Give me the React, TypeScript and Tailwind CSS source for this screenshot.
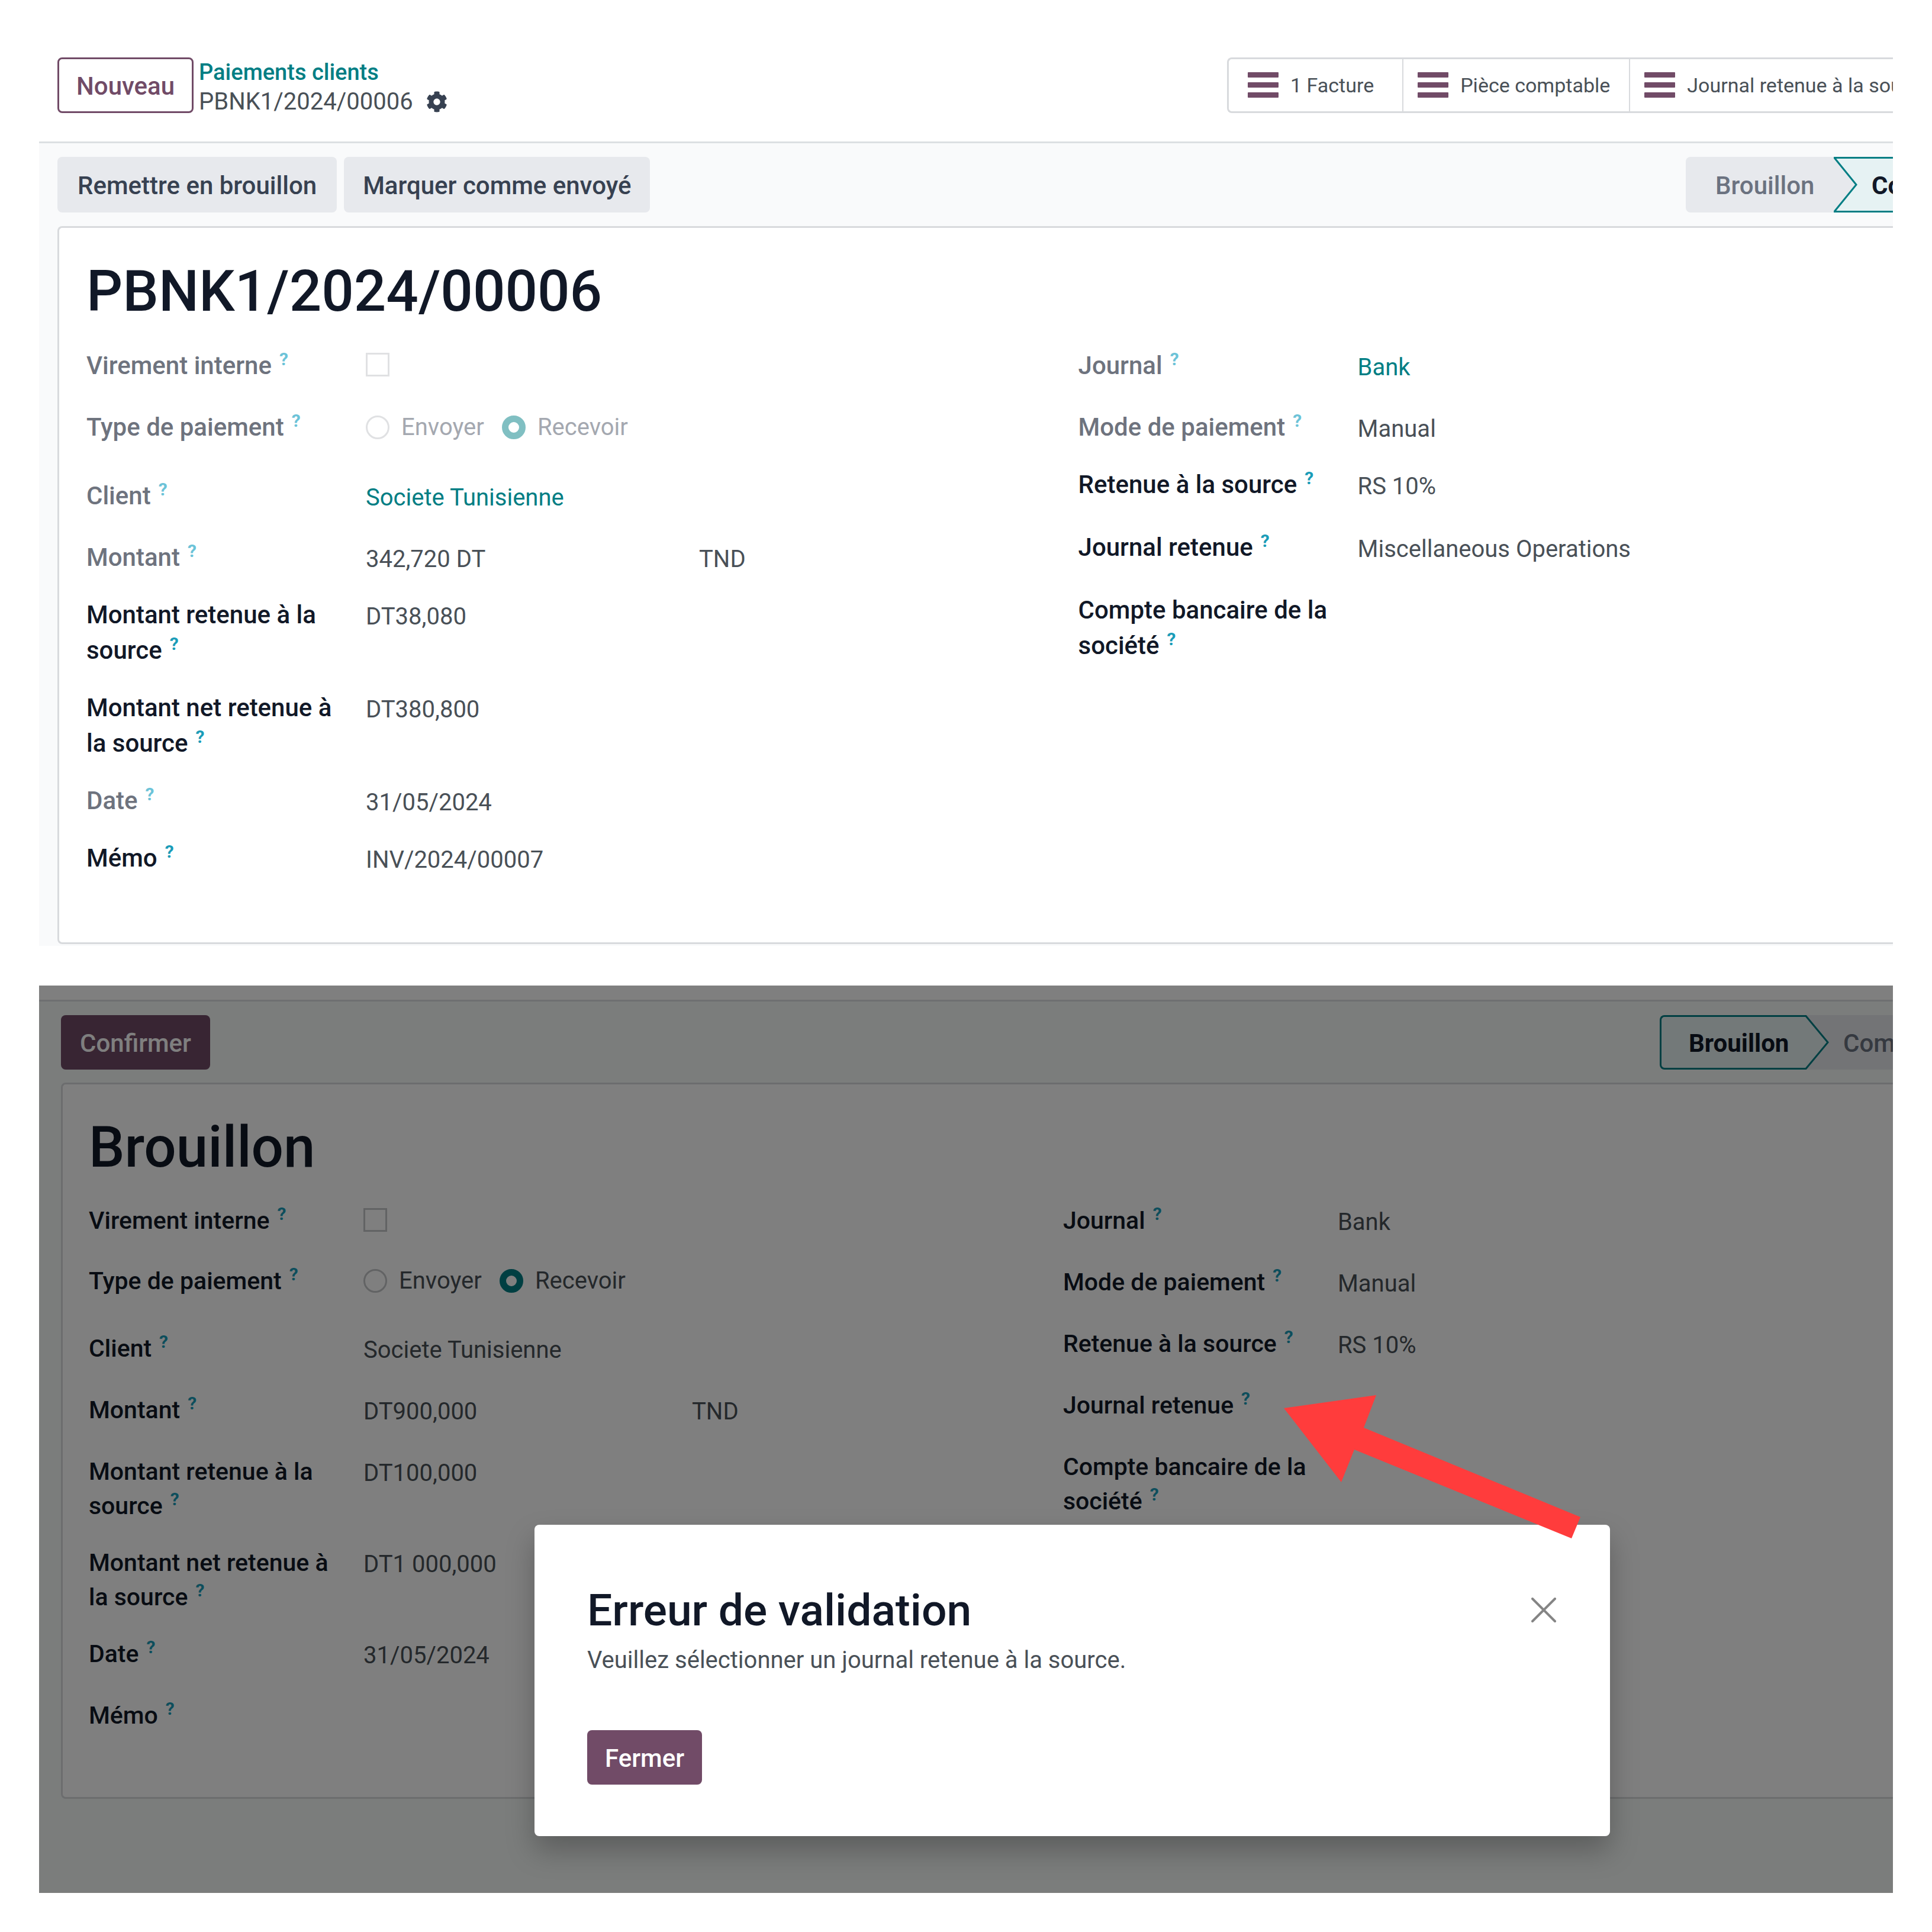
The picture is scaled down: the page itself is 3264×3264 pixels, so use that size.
import type { ReactNode } from "react";
import { FaCog } from "react-icons/fa";

type Field = {
  label: string;
  value?: ReactNode;
  extra?: string;
  muted?: boolean;
  control?: string;
  widget?: boolean;
  space: string;
};

type FieldStyle = { label: string; line: string; first: string };

const confirmedStyle: FieldStyle = { label: "w-[472px] pr-8 text-[42px]", line: "leading-[60px]", first: "w-[563px]" };
const draftStyle: FieldStyle = { label: "w-[464px] pr-7 text-[41px]", line: "leading-[58px]", first: "w-[555px]" };

function HelpMark({ muted }: { muted?: boolean }) {
  return <sup className={`ml-[13px] text-[30px] font-bold ${muted ? "text-[#6cc3d8]" : "text-[#1a9cb8]"}`}>?</sup>;
}

function FieldRow({ field, look }: { field: Field; look: FieldStyle }) {
  const labelClass = `${look.label} ${look.line} shrink-0 font-medium ${field.muted ? "text-[#6e737e]" : "text-[#111827]"}`;
  return (
    <div className={`flex items-start ${field.space}`}>
      {field.control ? (
        <label htmlFor={field.control} className={labelClass}>
          {field.label}
          <HelpMark muted={field.muted} />
        </label>
      ) : (
        <span className={labelClass}>
          {field.label}
          <HelpMark muted={field.muted} />
        </span>
      )}
      <div className={`${look.line} flex whitespace-nowrap text-[#495057] ${field.widget ? "" : "pt-[3px]"}`}>
        <span className={field.extra ? look.first : ""}>{field.value}</span>
        {field.extra && <span>{field.extra}</span>}
      </div>
    </div>
  );
}

function FieldGroup({ fields, look }: { fields: Field[]; look: FieldStyle }) {
  return (
    <div>
      {fields.map((f) => (
        <FieldRow key={f.label} field={f} look={look} />
      ))}
    </div>
  );
}

function Check({ id, muted }: { id: string; muted?: boolean }) {
  return (
    <input
      id={id}
      type="checkbox"
      disabled={muted}
      className={`mt-2 block size-10 appearance-none border-[3px] ${muted ? "border-[#e0e1e3]" : "border-[#c4c6c9]"}`}
    />
  );
}

function Radios({ prefix, muted }: { prefix: string; muted?: boolean }) {
  return (
    <div role="radiogroup" aria-label="Type de paiement" className="flex items-center">
      <input
        id={`${prefix}-envoyer`}
        name={`${prefix}-type`}
        type="radio"
        disabled={muted}
        className={`size-10 appearance-none rounded-full border-[3px] ${muted ? "border-[#e0e1e3]" : "border-[#c4c6c9]"}`}
      />
      <label htmlFor={`${prefix}-envoyer`} className={`ml-5 ${muted ? "text-[#a4a8b0]" : ""}`}>
        Envoyer
      </label>
      <input
        id={`${prefix}-recevoir`}
        name={`${prefix}-type`}
        type="radio"
        defaultChecked
        disabled={muted}
        className={`ml-[30px] size-10 appearance-none rounded-full border-[11px] bg-white ${muted ? "border-[#80bfc2]" : "border-[#017e84]"}`}
      />
      <label htmlFor={`${prefix}-recevoir`} className={`ml-5 ${muted ? "text-[#a4a8b0]" : ""}`}>
        Recevoir
      </label>
    </div>
  );
}

function BarsIcon() {
  return (
    <svg viewBox="0 0 52 44" className="h-11 w-[52px] shrink-0" fill="#714b67" aria-hidden="true">
      <rect y="0" width="52" height="9" rx="1" />
      <rect y="17" width="52" height="9" rx="1" />
      <rect y="34" width="52" height="9" rx="1" />
    </svg>
  );
}

function StatButton({ text, wide }: { text: string; wide?: boolean }) {
  return (
    <button
      className={`flex h-full shrink-0 items-center gap-5 border-r-2 border-[#d8dadd] text-[34px] whitespace-nowrap text-[#495057] ${wide ? "pl-8 pr-12" : "pl-6 pr-8"}`}
    >
      <BarsIcon />
      {text}
    </button>
  );
}

const confirmedLeft: Field[] = [
  { label: "Virement interne", value: <Check id="p1-interne" muted />, muted: true, control: "p1-interne", widget: true, space: "h-[60px] mb-11" },
  { label: "Type de paiement", value: <Radios prefix="p1" muted />, muted: true, widget: true, space: "h-[60px] mb-14" },
  { label: "Client", value: <a href="#client" className="text-[#017e84]">Societe Tunisienne</a>, muted: true, space: "h-[60px] mb-11" },
  { label: "Montant", value: "342,720 DT", extra: "TND", muted: true, space: "h-[60px] mb-[37px]" },
  { label: "Montant retenue à la source", value: "DT38,080", space: "mb-[37px]" },
  { label: "Montant net retenue à la source", value: "DT380,800", space: "mb-[37px]" },
  { label: "Date", value: "31/05/2024", muted: true, space: "h-[60px] mb-[37px]" },
  { label: "Mémo", value: "INV/2024/00007", space: "h-[60px]" },
];

const confirmedRight: Field[] = [
  { label: "Journal", value: <a href="#journal" className="text-[#017e84]">Bank</a>, muted: true, space: "h-[60px] mb-11" },
  { label: "Mode de paiement", value: "Manual", muted: true, space: "h-[60px] mb-[37px]" },
  { label: "Retenue à la source", value: "RS 10%", space: "h-[60px] mb-[46px]" },
  { label: "Journal retenue", value: "Miscellaneous Operations", space: "h-[60px] mb-[46px]" },
  { label: "Compte bancaire de la société", space: "" },
];

const draftLeft: Field[] = [
  { label: "Virement interne", value: <Check id="p2-interne" />, control: "p2-interne", widget: true, space: "h-[58px] mb-11" },
  { label: "Type de paiement", value: <Radios prefix="p2" />, widget: true, space: "h-[58px] mb-14" },
  { label: "Client", value: "Societe Tunisienne", space: "h-[58px] mb-[46px]" },
  { label: "Montant", value: "DT900,000", extra: "TND", space: "h-[58px] mb-[46px]" },
  { label: "Montant retenue à la source", value: "DT100,000", space: "mb-[38px]" },
  { label: "Montant net retenue à la source", value: "DT1 000,000", space: "mb-[38px]" },
  { label: "Date", value: "31/05/2024", space: "h-[58px] mb-[46px]" },
  { label: "Mémo", space: "h-[58px]" },
];

const draftRight: Field[] = [
  { label: "Journal", value: "Bank", space: "h-[58px] mb-[46px]" },
  { label: "Mode de paiement", value: "Manual", space: "h-[58px] mb-[46px]" },
  { label: "Retenue à la source", value: "RS 10%", space: "h-[58px] mb-[46px]" },
  { label: "Journal retenue", space: "h-[58px] mb-[46px]" },
  { label: "Compte bancaire de la société", space: "" },
];

function ConfirmedPayment() {
  return (
    <section className="overflow-hidden bg-[#f9fafb]">
      <header className="flex h-[176px] items-start border-b-[3px] border-[#dcdfe2] bg-white pt-[31px] pl-[31px]">
        <button className="h-[94px] shrink-0 rounded-lg border-[3px] border-[#714b67] px-[29px] pt-[2px] text-[42px] font-medium text-[#714b67]">
          Nouveau
        </button>
        <div className="ml-[9px] flex h-[94px] flex-col justify-center pt-[5px] whitespace-nowrap">
          <a href="#paiements" className="text-[38px] leading-[50px] font-medium text-[#017e84]">
            Paiements clients
          </a>
          <div className="flex items-center leading-[50px] text-[#495057]">
            PBNK1/2024/00006
            <button aria-label="Actions" className="ml-[22px]">
              <FaCog className="size-9 text-[#374151]" />
            </button>
          </div>
        </div>
        <div className="ml-auto flex h-[94px] w-[1125px] shrink-0 rounded-l-lg border-[3px] border-r-0 border-[#d8dadd]">
          <StatButton text="1 Facture" wide />
          <StatButton text="Pièce comptable" />
          <StatButton text="Journal retenue à la source" />
        </div>
      </header>

      <div className="flex pt-[23px] pl-[31px] text-[42px] font-medium">
        <button className="h-[94px] shrink-0 rounded-lg bg-[#e7e9ed] px-[34px] pt-[2px] text-[#374151]">
          Remettre en brouillon
        </button>
        <button className="ml-3 h-[94px] shrink-0 rounded-lg bg-[#e7e9ed] px-8 pt-[2px] text-[#374151]">
          Marquer comme envoyé
        </button>
        <div className="ml-auto flex h-[94px] w-[350px] shrink-0">
          <button className="w-[250px] shrink-0 rounded-l-lg bg-[#e7e9ed] pt-[2px] pl-[50px] text-left text-[#6b7280]">
            Brouillon
          </button>
          <svg viewBox="0 0 40 94" className="h-[94px] w-10 shrink-0" aria-hidden="true">
            <rect width="40" height="94" fill="#e6f2f3" />
            <path d="M0 0 L40 47 L0 94 Z" fill="#e7e9ed" />
            <path d="M40 1.5 H1 L38 47 L1 92.5 H40" fill="none" stroke="#017e84" strokeWidth="3" />
          </svg>
          <button className="shrink-0 border-y-[3px] border-[#017e84] bg-[#e6f2f3] px-6 pt-[2px] font-bold text-[#111827]">
            Comptabilisé
          </button>
        </div>
      </div>

      <div className="mt-[23px] mb-[3px] ml-[31px] rounded-l-lg border-[3px] border-r-0 border-[#d8dadd] bg-white pt-[47px] pb-[112px] pl-[46px]">
        <h1 className="text-[96px] leading-[120px] font-medium text-[#111827]">PBNK1/2024/00006</h1>
        <div className="mt-9 grid grid-cols-[549fr_451fr]">
          <FieldGroup fields={confirmedLeft} look={confirmedStyle} />
          <FieldGroup fields={confirmedRight} look={confirmedStyle} />
        </div>
      </div>
    </section>
  );
}

function DraftPayment() {
  return (
    <section className="relative overflow-hidden bg-[#f6fbf8]">
      <div className="h-[27px] border-b-[3px] border-[#dcdfe2] bg-white" />
      <div className="flex pt-[23px] pl-[37px] text-[42px] font-medium">
        <button className="h-[92px] shrink-0 rounded-lg bg-[#714b67] px-8 pt-[2px] text-white">Confirmer</button>
        <div className="ml-auto flex h-[92px] w-[394px] shrink-0">
          <button className="w-[246px] shrink-0 rounded-l-lg border-[3px] border-r-0 border-[#017e84] bg-[#e6f2f3] pt-[2px] pl-[46px] text-left font-bold text-[#111827]">
            Brouillon
          </button>
          <svg viewBox="0 0 40 92" className="h-[92px] w-10 shrink-0" aria-hidden="true">
            <rect width="40" height="92" fill="#e7e9ed" />
            <path d="M0 1.5 H1 L38 46 L1 90.5 H0" fill="#e6f2f3" stroke="#017e84" strokeWidth="3" />
          </svg>
          <button className="shrink-0 bg-[#e7e9ed] px-6 pt-[2px] text-[#6b7280]">Comptabilisé</button>
        </div>
      </div>

      <div className="mt-[22px] mb-[159px] ml-[37px] rounded-l-lg border-[3px] border-r-0 border-[#d8dadd] bg-white pt-[47px] pb-[109px] pl-[44px]">
        <h1 className="text-[96px] leading-[118px] font-medium text-[#111827]">Brouillon</h1>
        <div className="mt-9 grid grid-cols-[54fr_46fr]">
          <FieldGroup fields={draftLeft} look={draftStyle} />
          <FieldGroup fields={draftRight} look={draftStyle} />
        </div>
      </div>

      <div className="absolute inset-0 bg-black/50" />

      <div
        role="dialog"
        aria-labelledby="dialog-title"
        className="absolute top-[911px] left-[837px] w-[58%] rounded-lg bg-white pt-[98px] pr-[91px] pb-[87px] pl-[89px] shadow-[0_24px_48px_rgba(0,0,0,0.25)]"
      >
        <div className="flex items-center justify-between">
          <h2 id="dialog-title" className="text-[75px] leading-[92px] font-medium text-[#111827]">
            Erreur de validation
          </h2>
          <button aria-label="Fermer la fenêtre">
            <svg viewBox="0 0 42 42" className="size-[42px]" stroke="#858585" strokeWidth="4" strokeLinecap="round" aria-hidden="true">
              <path d="M2 2 L40 40 M40 2 L2 40" />
            </svg>
          </button>
        </div>
        <p className="mt-[10px] leading-[58px] text-[#495057]">Veuillez sélectionner un journal retenue à la source.</p>
        <button className="mt-[89px] block h-[92px] rounded-lg bg-[#714b67] px-[30px] pt-[2px] text-[42px] font-medium text-white">
          Fermer
        </button>
      </div>

      <svg
        viewBox="0 0 502 242"
        className="absolute top-[692px] left-[2103px] h-[242px] w-[502px]"
        fill="#ff3c3c"
        aria-hidden="true"
      >
        <path d="M0 22 L156 0 L135 55 L501 206 L486 242 L119 92 L97 147 Z" />
      </svg>
    </section>
  );
}

export default function App() {
  return (
    <main className="flex flex-col gap-[67px] bg-white p-[66px] font-[Roboto,sans-serif] text-[40px]">
      <ConfirmedPayment />
      <DraftPayment />
    </main>
  );
}
